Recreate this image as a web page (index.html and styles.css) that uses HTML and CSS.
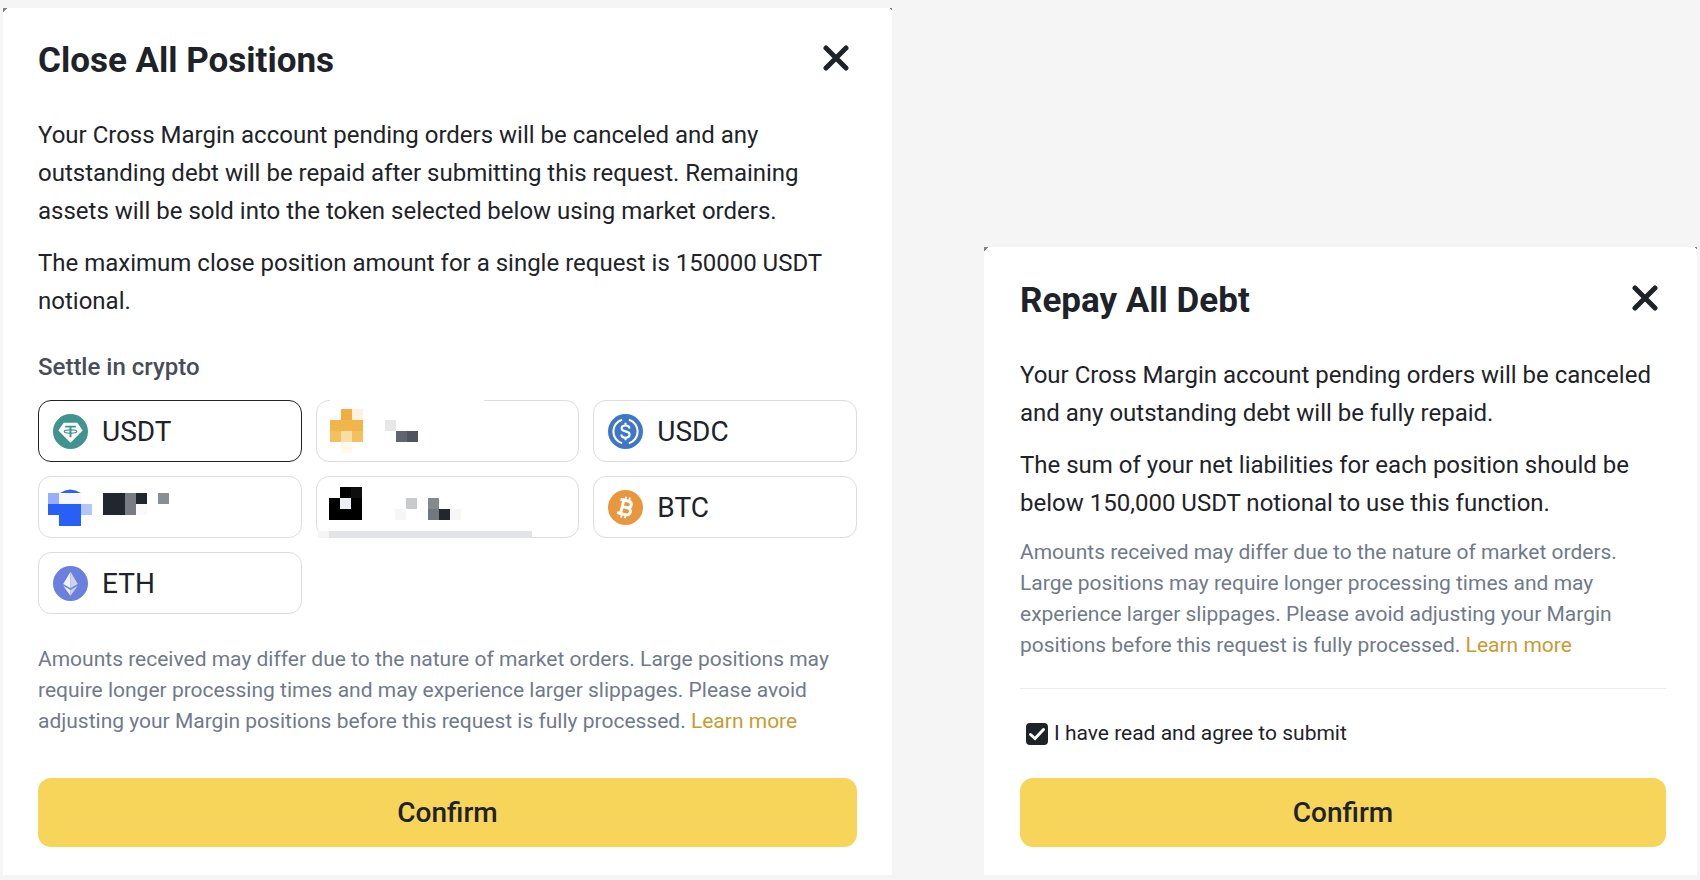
FILE: index.html
```html
<!DOCTYPE html>
<html lang="en">

<head>
    <meta charset="UTF-8">
    <meta name="viewport" content="width=device-width, initial-scale=1">
    <title>Cross Margin</title>
    <link rel="stylesheet" href="styles.css">
</head>

<body>
    <main class="page">
        <section class="modal" aria-labelledby="close-title">
            <header class="modal-header">
                <h2 id="close-title">Close All Positions</h2>
                <button class="close" type="button" aria-label="Close">
                    <svg viewBox="0 0 26 26"><path d="M3 3L23 23M23 3L3 23" /></svg>
                </button>
            </header>

            <div class="text">
                <p>Your Cross Margin account pending orders will be canceled and any outstanding debt will be repaid after submitting this request. Remaining assets will be sold into the token selected below using market orders.</p>
                <p>The maximum close position amount for a single request is 150000 USDT notional.</p>
            </div>

            <fieldset class="settle">
                <legend>Settle in crypto</legend>
                <div class="coins">
                    <label class="coin">
                        <input type="radio" name="coin" value="usdt" checked>
                        <svg class="coin-icon" viewBox="0 0 36 36">
                            <circle cx="18" cy="18" r="18" fill="#419390" />
                            <path d="M11 9H25L30.500 17L18 29.500L5.500 17Z" fill="#fff" />
                            <path d="M12.500 13H23.500M18 13V24" fill="none" stroke="#419390" stroke-width="2" />
                            <ellipse cx="18" cy="18" rx="6.500" ry="1.700" fill="none" stroke="#419390" stroke-width="1.100" />
                        </svg>
                        <span>USDT</span>
                    </label>

                    <label class="coin">
                        <input type="radio" name="coin" value="2" aria-label="Hidden coin">
                        <svg class="mosaic" viewBox="0 0 264 62">
                            <path d="M14 -1H168V3H14Z" fill="#fff" />
                            <path d="M25 9h11v11h-11z" fill="#f0ae40" />
                            <path d="M36 9h11v11h-11z" fill="#fdf2e2" />
                            <path d="M14 20h33v11h-33z" fill="#f1b649" />
                            <path d="M14 31h33v11h-33z" fill="#f2c15e" />
                            <path d="M25 31h11v11h-11z" fill="#f8dfaa" />
                            <path d="M25 42h11v11h-11z" fill="#fef9eb" />
                            <path d="M69 20h11v11h-11z" fill="#e7e7e7" />
                            <path d="M80 31h11v11h-11z" fill="#61656f" />
                            <path d="M91 31h11v11h-11z" fill="#50545e" />
                        </svg>
                    </label>

                    <label class="coin">
                        <input type="radio" name="coin" value="usdc">
                        <svg class="coin-icon" viewBox="0 0 36 36">
                            <circle cx="18" cy="18" r="18" fill="#3f76c8" />
                            <g fill="none" stroke="#fff" stroke-width="2.200">
                                <path d="M14.500 6A12.500 12.500 0 0 0 14.500 30M21.500 6A12.500 12.500 0 0 1 21.500 30" />
                                <path d="M22 14.800C22 12.800 20.500 11.800 18 11.800S14 13 14 14.900C14 19 22.200 16.800 22.200 21C22.200 23 20.500 24.200 18 24.200S13.800 23 13.800 21M18 9V12M18 24V27" />
                            </g>
                        </svg>
                        <span>USDC</span>
                    </label>

                    <label class="coin">
                        <input type="radio" name="coin" value="4" aria-label="Hidden coin">
                        <svg class="mosaic" viewBox="0 0 264 62">
                            <path d="M22 17Q32 10 43 17Z" fill="#2860f6" />
                            <path d="M10 17h11v11h-11z" fill="#97affa" />
                            <path d="M21 17h22v11h-22z" fill="#f4f7ff" />
                            <path d="M10 28h33v11h-33zM21 39h22v11h-22z" fill="#2860f6" />
                            <path d="M43 28h11v11h-11z" fill="#b3c5fb" />
                            <path d="M65 17h22v22h-22zM98 17h11v11h-11z" fill="#22262f" />
                            <path d="M87 17h11v22h-11z" fill="#797c85" />
                            <path d="M98 28h11v11h-11z" fill="#fafafa" />
                            <path d="M120 17h11v11h-11z" fill="#8a8d91" />
                        </svg>
                    </label>

                    <label class="coin">
                        <input type="radio" name="coin" value="5" aria-label="Hidden coin">
                        <svg class="mosaic" viewBox="0 0 264 62">
                            <path d="M24 11h11v11h-11zM13 22h33v22h-33z" fill="#000" />
                            <path d="M35 11h11v11h-11z" fill="#0e0e0e" />
                            <path d="M24 22h11v11h-11z" fill="#eceef1" />
                            <path d="M90 22h11v11h-11z" fill="#c9cacc" />
                            <path d="M112 22h11v11h-11z" fill="#868a8d" />
                            <path d="M79 33h11v11h-11zM134 33h11v11h-11z" fill="#f6f6f6" />
                            <path d="M112 33h11v11h-11z" fill="#737780" />
                            <path d="M123 33h11v11h-11z" fill="#22262f" />
                            <path d="M2 55h11v7h-11z" fill="#f5f5f5" />
                            <path d="M13 55h203v7h-203z" fill="#e3e4e8" />
                        </svg>
                    </label>

                    <label class="coin">
                        <input type="radio" name="coin" value="btc">
                        <svg class="coin-icon" viewBox="0 0 36 36">
                            <circle cx="18" cy="18" r="18" fill="#e9973f" />
                            <g transform="rotate(14 18 18)" fill="none" stroke="#fff">
                                <path d="M11 11H19.500C24.300 11 24.300 17.800 19.500 17.800H14.500M19.500 17.800C25.500 17.800 25.500 25.200 19.500 25.200H11M14.500 11V25" stroke-width="3" />
                                <path d="M16 7V11M20 7V11M16 25V29M20 25V29" stroke-width="2" />
                            </g>
                        </svg>
                        <span>BTC</span>
                    </label>

                    <label class="coin">
                        <input type="radio" name="coin" value="eth">
                        <svg class="coin-icon" viewBox="0 0 36 36">
                            <circle cx="18" cy="18" r="18" fill="#6b80dc" />
                            <path d="M18 6L10.500 18.500L18 23Z" fill="#f0f2fb" />
                            <path d="M18 6L25.500 18.500L18 23Z" fill="#cfd3e6" />
                            <path d="M10.500 20.300L18 24.700V30.500Z" fill="#f0f2fb" />
                            <path d="M25.500 20.300L18 24.700V30.500Z" fill="#cfd3e6" />
                        </svg>
                        <span>ETH</span>
                    </label>
                </div>
            </fieldset>

            <p class="note">Amounts received may differ due to the nature of market orders. Large positions may require longer processing times and may experience larger slippages. Please avoid adjusting your Margin positions before this request is fully processed. <a href="#">Learn more</a></p>

            <button class="confirm" type="button">Confirm</button>
        </section>

        <section class="modal modal-repay" aria-labelledby="repay-title">
            <header class="modal-header">
                <h2 id="repay-title">Repay All Debt</h2>
                <button class="close" type="button" aria-label="Close">
                    <svg viewBox="0 0 26 26"><path d="M3 3L23 23M23 3L3 23" /></svg>
                </button>
            </header>

            <div class="text">
                <p>Your Cross Margin account pending orders will be canceled and any outstanding debt will be fully repaid.</p>
                <p>The sum of your net liabilities for each position should be below 150,000 USDT notional to use this function.</p>
            </div>

            <p class="note">Amounts received may differ due to the nature of market orders. Large positions may require longer processing times and may experience larger slippages. Please avoid adjusting your Margin positions before this request is fully processed. <a href="#">Learn more</a></p>

            <label class="agree">
                <span class="check">
                    <input type="checkbox" checked>
                    <svg viewBox="0 0 22 22"><path d="M4.500 11.500L9 15.500L17.500 6.500" /></svg>
                </span>
                <span>I have read and agree to submit</span>
            </label>

            <button class="confirm" type="button">Confirm</button>
        </section>
    </main>
</body>

</html>
```
FILE: styles.css
```css
* {
    box-sizing: border-box;
}

body {
    margin: 0;
    background-color: #f5f5f5;
    color: #1e2329;
    font-family: Roboto, "Liberation Sans", sans-serif;
}

h2,
p {
    margin: 0;
}

button {
    border: none;
    font-family: inherit;
    color: inherit;
    cursor: pointer;
}

.page {
    display: grid;
    grid-template-columns: 889fr 713fr;
    column-gap: 92px;
    align-items: end;
    padding: 8px 3px 6px;
}

.modal {
    padding: 29px 35px 28px;
    /* dark backdrop peeking out at the corners */
    background:
        linear-gradient(135deg, #80838a 3px, transparent 3px) top left / 6px 6px no-repeat,
        linear-gradient(225deg, #80838a 2px, transparent 2px) top right / 6px 6px no-repeat,
        #fff;
}

.modal-repay {
    padding: 30px 31px 28px 36px;
}

.modal-header {
    display: flex;
    justify-content: space-between;
    align-items: flex-start;
    padding-right: 8px;
    margin-bottom: 31px;
}

.modal-header h2 {
    font-size: 35px;
    line-height: 48px;
    font-weight: 700;
}

.close {
    padding: 8px 0 0;
    background: none;
}

.close svg {
    display: block;
    width: 26px;
    height: 26px;
    fill: none;
    stroke: #1e2329;
    stroke-width: 5;
    stroke-linecap: round;
}

.text {
    display: flex;
    flex-direction: column;
    gap: 14px;
    font-size: 24px;
    line-height: 38px;
}

.settle {
    margin: 28px 0 30px;
    padding: 0;
    border: none;
}

.settle legend {
    padding: 0;
    margin-bottom: 14px;
    color: #474d57;
    font-size: 24px;
    line-height: 38px;
    font-weight: 500;
}

.coins {
    display: grid;
    grid-template-columns: repeat(3, 1fr);
    gap: 14px;
}

.coin {
    position: relative;
    display: flex;
    align-items: center;
    gap: 14px;
    height: 62px;
    padding: 0 14px;
    border: 1px solid #dcdde2;
    border-radius: 13px;
    font-size: 28px;
    cursor: pointer;
}

.coin:has(input:checked) {
    border-color: #1e2329;
}

.coin input {
    appearance: none;
    position: absolute;
    margin: 0;
}

.coin-icon {
    width: 35px;
    height: 35px;
}

.mosaic {
    position: absolute;
    top: -1px;
    left: -1px;
    width: 264px;
    height: 62px;
    overflow: visible;
}

.note {
    color: #707a8a;
    font-size: 21px;
    line-height: 31px;
}

.note a {
    color: #c99b30;
    text-decoration: none;
}

.confirm {
    display: block;
    width: 100%;
    height: 69px;
    margin-top: 41px;
    border-radius: 13px;
    background-color: #f6d55a;
    font-size: 28px;
    font-weight: 500;
}

.modal-repay .note {
    margin-top: 15px;
    padding-bottom: 27px;
    border-bottom: 1px solid #eaecef;
}

.agree {
    display: flex;
    align-items: center;
    gap: 6px;
    margin-top: 29px;
    padding-left: 6px;
    font-size: 21px;
    line-height: 31px;
}

.check {
    display: grid;
}

.check input,
.check svg {
    grid-area: 1 / 1;
    width: 22px;
    height: 22px;
    margin: 0;
}

.check input {
    appearance: none;
    border: 2px solid #1e2329;
    border-radius: 4px;
}

.check input:checked {
    background-color: #1e2329;
}

.check svg {
    fill: none;
    stroke: #fff;
    stroke-width: 3;
    stroke-linecap: round;
    pointer-events: none;
}

.modal-repay .confirm {
    margin-top: 29px;
}
```
